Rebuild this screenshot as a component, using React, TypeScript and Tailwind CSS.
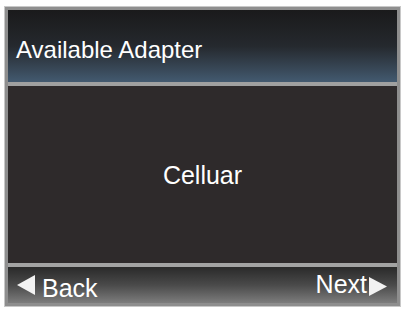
export default function App() {
  return (
    <div className="w-[403px] h-[309px] bg-white pt-[6px] pl-[4px] pr-[2px] pb-[2px]" style={{ fontFamily: '"Liberation Sans", Arial, sans-serif' }}>
      <div className="w-full h-full bg-[#8e8e8e] border border-[#c8c8c8] p-[3px] flex flex-col">
        <div className="h-[72px] flex items-end pb-[20px] pl-[8px] text-white text-[24px] leading-none bg-gradient-to-b from-[#1a1a1b] via-[#25292e] to-[#435a70]">
          Available Adapter
        </div>
        <div className="h-[4px] bg-[#a0a0a0]" />
        <div className="flex-1 bg-[#2e2a2b] flex items-center justify-center text-white text-[25px] leading-none pt-[2px]">
          Celluar
        </div>
        <div className="h-[4px] bg-[#a3a3a3]" />
        <div className="h-[36px] flex items-center justify-between pl-[9px] pr-[10px] text-white text-[25px] leading-none bg-gradient-to-b from-[#2a2a2a] via-[#4a4a4a] to-[#7d7d7d]">
          <div className="flex items-center gap-[7px]">
            <svg width="18" height="20" viewBox="0 0 18 20"><polygon points="18,0 18,20 0,10" fill="#f2f2f2" /></svg>
            <span className="pt-[6px]">Back</span>
          </div>
          <div className="flex items-center gap-[2px]">
            <span className="pb-[2px]">Next</span>
            <svg width="18" height="19" viewBox="0 0 18 19" className="mt-[2px]"><polygon points="0,0 0,19 18,9.5" fill="#f2f2f2" /></svg>
          </div>
        </div>
      </div>
    </div>
  );
}
